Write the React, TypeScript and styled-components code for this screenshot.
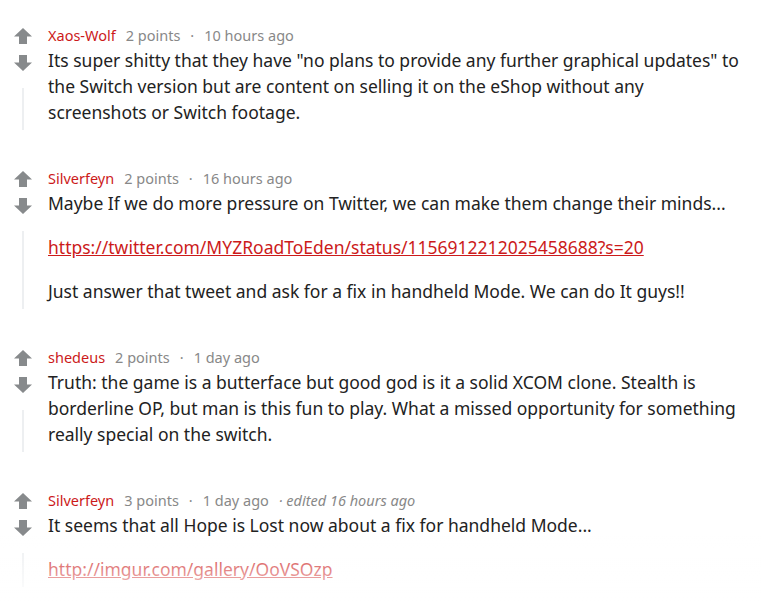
import React from "react";
import styled, { createGlobalStyle } from "styled-components";

const GlobalStyle = createGlobalStyle`
  html, body {
    margin: 0;
    padding: 0;
    background: #ffffff;
    overflow: hidden;
  }
  body {
    font-family: "Noto Sans", "Open Sans", Arial, sans-serif;
  }
`;

const Page = styled.div`
  position: relative;
  height: 602px;
  overflow: hidden;
  padding: 24px 0 0 14px;
  box-sizing: border-box;
`;

const Comment = styled.div`
  display: flex;
  margin-bottom: 37px;
`;

const VoteColumn = styled.div`
  display: flex;
  flex-direction: column;
  align-items: center;
  width: 18px;
  padding-top: 4px;
  margin-right: 16px;
  flex-shrink: 0;
`;

const ArrowButton = styled.svg`
  display: block;
  width: 18px;
  height: 16px;
  fill: #878a8c;
  & + & {
    margin-top: 11px;
  }
`;

const ThreadLine = styled.div`
  flex: 1;
  width: 2px;
  margin-top: 17px;
  background: #edeff1;
`;

const Content = styled.div`
  flex: 1;
  min-width: 0;
  padding-right: 18px;
  padding-bottom: 5px;
`;

const Header = styled.div`
  display: flex;
  align-items: baseline;
  gap: 10px;
  font-size: 14.5px;
  line-height: 22px;
  color: #888888;
`;

const Author = styled.a`
  color: #cc1a1a;
  text-decoration: none;
`;

const Meta = styled.span<{ $italic?: boolean }>`
  color: #888888;
  font-style: ${(p) => (p.$italic ? "italic" : "normal")};
`;

const Body = styled.div`
  margin-top: 1px;
  font-size: 17.5px;
  line-height: 26px;
  color: #222222;
`;

const Paragraph = styled.p`
  margin: 0;
  & + & {
    margin-top: 18px;
  }
`;

const Link = styled.a`
  color: #cc1a1a;
  text-decoration: underline;
`;

const Fade = styled.div`
  position: fixed;
  left: 0;
  right: 0;
  bottom: 0;
  height: 66px;
  background: linear-gradient(
    to bottom,
    rgba(255, 255, 255, 0),
    rgba(255, 255, 255, 0.55) 60%,
    rgba(255, 255, 255, 0.9)
  );
  pointer-events: none;
`;

const UpArrow = () => (
  <ArrowButton viewBox="0 0 18 16">
    <path d="M9 0 L18 8.5 H13 V16 H5 V8.5 H0 Z" />
  </ArrowButton>
);

const DownArrow = () => (
  <ArrowButton viewBox="0 0 18 16">
    <path d="M9 16 L18 7.5 H13 V0 H5 V7.5 H0 Z" />
  </ArrowButton>
);

type CommentData = {
  author: string;
  points: string;
  time: string;
  edited?: string;
  paragraphs: { text: string; link?: boolean }[];
};

const comments: CommentData[] = [
  {
    author: "Xaos-Wolf",
    points: "2 points",
    time: "10 hours ago",
    paragraphs: [
      {
        text: 'Its super shitty that they have "no plans to provide any further graphical updates" to the Switch version but are content on selling it on the eShop without any screenshots or Switch footage.',
      },
    ],
  },
  {
    author: "Silverfeyn",
    points: "2 points",
    time: "16 hours ago",
    paragraphs: [
      {
        text: "Maybe If we do more pressure on Twitter, we can make them change their minds...",
      },
      {
        text: "https://twitter.com/MYZRoadToEden/status/1156912212025458688?s=20",
        link: true,
      },
      {
        text: "Just answer that tweet and ask for a fix in handheld Mode. We can do It guys!!",
      },
    ],
  },
  {
    author: "shedeus",
    points: "2 points",
    time: "1 day ago",
    paragraphs: [
      {
        text: "Truth: the game is a butterface but good god is it a solid XCOM clone. Stealth is borderline OP, but man is this fun to play. What a missed opportunity for something really special on the switch.",
      },
    ],
  },
  {
    author: "Silverfeyn",
    points: "3 points",
    time: "1 day ago",
    edited: "· edited 16 hours ago",
    paragraphs: [
      {
        text: "It seems that all Hope is Lost now about a fix for handheld Mode...",
      },
      { text: "http://imgur.com/gallery/OoVSOzp", link: true },
    ],
  },
];

const App = () => {
  return (
    <Page>
      <GlobalStyle />
      {comments.map((c, i) => (
        <Comment key={i}>
          <VoteColumn>
            <UpArrow />
            <DownArrow />
            <ThreadLine />
          </VoteColumn>
          <Content>
            <Header>
              <Author href="#">{c.author}</Author>
              <Meta>{c.points}</Meta>
              <Meta>·</Meta>
              <Meta>{c.time}</Meta>
              {c.edited && <Meta $italic>{c.edited}</Meta>}
            </Header>
            <Body>
              {c.paragraphs.map((p, j) => (
                <Paragraph key={j}>
                  {p.link ? <Link href="#">{p.text}</Link> : p.text}
                </Paragraph>
              ))}
            </Body>
          </Content>
        </Comment>
      ))}
      <Fade />
    </Page>
  );
};

export default App;
